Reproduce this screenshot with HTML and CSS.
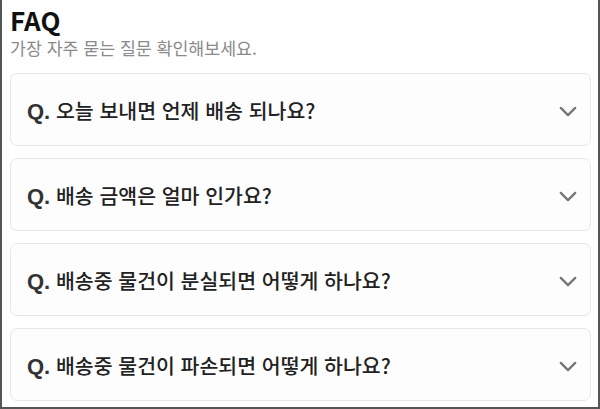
FILE: index.html
```html
<!DOCTYPE html>
<html lang="ko">
<head>
    <meta charset="UTF-8">
    <title>FAQ</title>
    <link rel="stylesheet" href="styles.css">
</head>
<body>

<div class="faq-page">
    <div class="faq-header">
        <h1>FAQ</h1>
        <p class="faq-sub">가장 자주 묻는 질문 확인해보세요.</p>
    </div>

    <div class="faq-list">
        <div class="faq-item">
            <span class="faq-q"><b>Q.</b> 오늘 보내면 언제 배송 되나요?</span>
            <svg class="chevron" viewBox="0 0 20 12" width="18" height="11"><path d="M2 2 L10 10 L18 2" fill="none" stroke="#777" stroke-width="2.6" stroke-linecap="round" stroke-linejoin="round"/></svg>
        </div>
        <div class="faq-item">
            <span class="faq-q"><b>Q.</b> 배송 금액은 얼마 인가요?</span>
            <svg class="chevron" viewBox="0 0 20 12" width="18" height="11"><path d="M2 2 L10 10 L18 2" fill="none" stroke="#777" stroke-width="2.6" stroke-linecap="round" stroke-linejoin="round"/></svg>
        </div>
        <div class="faq-item">
            <span class="faq-q"><b>Q.</b> 배송중 물건이 분실되면 어떻게 하나요?</span>
            <svg class="chevron" viewBox="0 0 20 12" width="18" height="11"><path d="M2 2 L10 10 L18 2" fill="none" stroke="#777" stroke-width="2.6" stroke-linecap="round" stroke-linejoin="round"/></svg>
        </div>
        <div class="faq-item">
            <span class="faq-q"><b>Q.</b> 배송중 물건이 파손되면 어떻게 하나요?</span>
            <svg class="chevron" viewBox="0 0 20 12" width="18" height="11"><path d="M2 2 L10 10 L18 2" fill="none" stroke="#777" stroke-width="2.6" stroke-linecap="round" stroke-linejoin="round"/></svg>
        </div>
    </div>
</div>

</body>
</html>
```

FILE: styles.css
```css
body, html {
    margin: 0;
    padding: 0;
    background-color: #fff;
    font-family: "Noto Sans CJK KR", "Noto Sans", sans-serif;
    color: #222;
}

.faq-page {
    box-sizing: border-box;
    height: 409px;
    border: 2px solid #555;
    border-top: none;
    padding: 0 7px 0 8px;
    overflow: hidden;
}

.faq-header h1 {
    margin: 0;
    padding-top: 6px;
    font-size: 26px;
    font-weight: 700;
    line-height: 28px;
    color: #111;
}

.faq-sub {
    margin: 3px 0 0;
    font-size: 17.3px;
    line-height: 22px;
    color: #8a8a8a;
}

.faq-list {
    display: flex;
    flex-direction: column;
    gap: 12px;
    margin-top: 14px;
}

.faq-item {
    display: flex;
    align-items: center;
    justify-content: space-between;
    height: 71px;
    padding: 0 13px 0 16px;
    border: 1px solid #e4e8ee;
    border-radius: 7px;
    background-color: #fdfdfd;
}

.faq-q {
    font-size: 20.5px;
    font-weight: 500;
    color: #222;
}

.faq-q b {
    font-family: "Liberation Sans", Arial, sans-serif;
    font-weight: 700;
    font-size: 22px;
    color: #333;
}

.chevron {
    margin-top: 4px;
}
```
